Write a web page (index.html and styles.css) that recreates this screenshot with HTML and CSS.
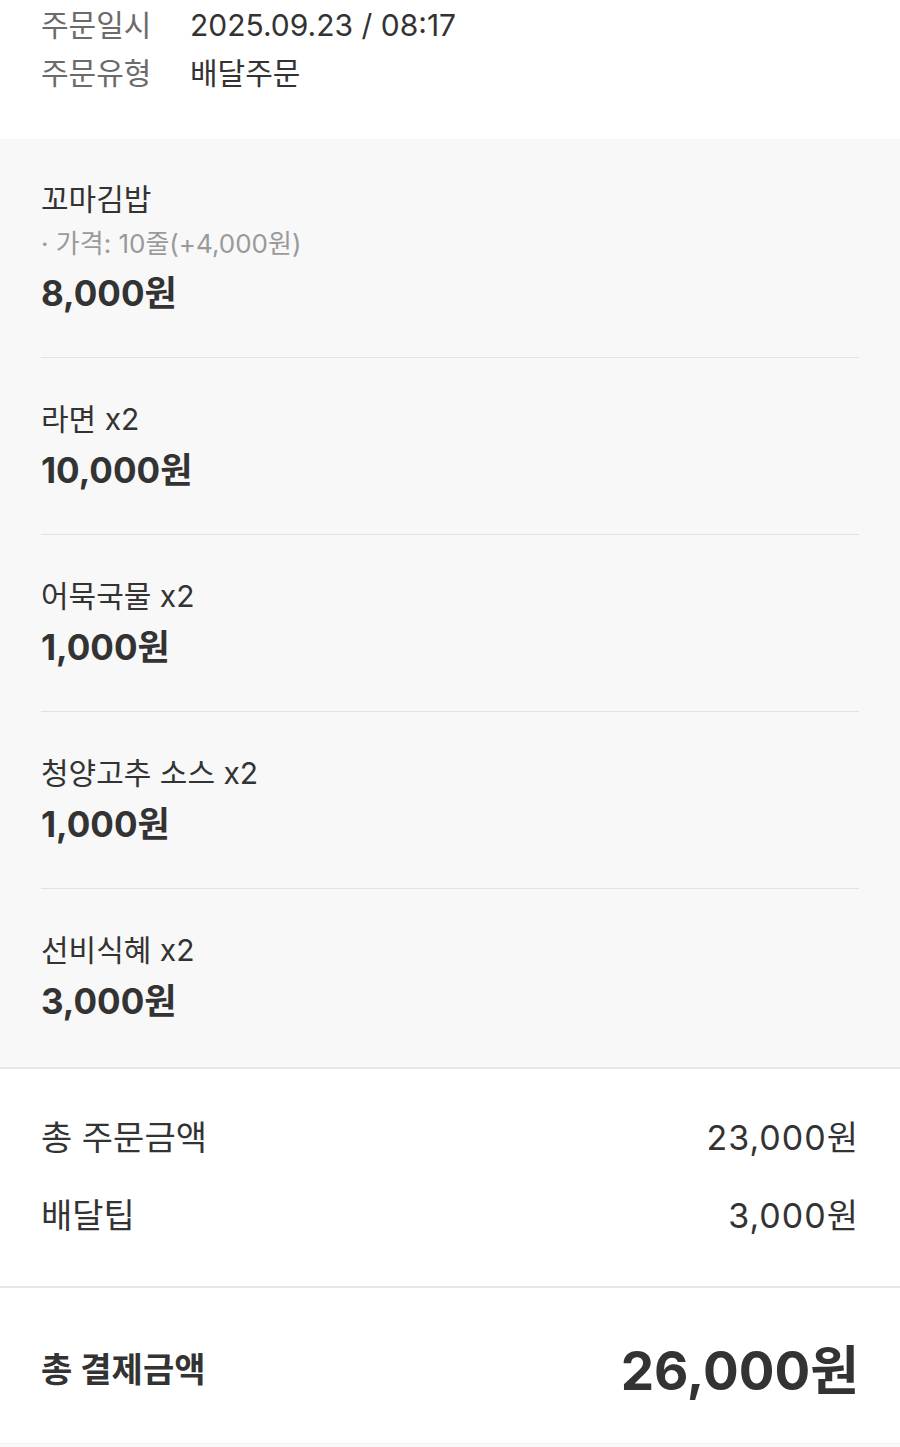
FILE: index.html
```html
<!DOCTYPE html>
<html lang="ko">
<head>
<meta charset="utf-8">
<meta name="viewport" content="width=device-width, initial-scale=1">
<title>주문상세</title>
<link rel="stylesheet" href="styles.css">
</head>
<body>
    <div class="order-info">
        <div class="info-row">
            <span class="info-label">주문일시</span>
            <span class="info-value">2025.09.23 / 08:17</span>
        </div>
        <div class="info-row">
            <span class="info-label">주문유형</span>
            <span class="info-value">배달주문</span>
        </div>
    </div>

    <div class="menu-list">
        <div class="menu-item">
            <p class="menu-name">꼬마김밥</p>
            <p class="menu-option">· 가격: 10줄(+4,000원)</p>
            <p class="menu-price">8,000원</p>
        </div>
        <div class="menu-item">
            <p class="menu-name">라면 x2</p>
            <p class="menu-price">10,000원</p>
        </div>
        <div class="menu-item">
            <p class="menu-name">어묵국물 x2</p>
            <p class="menu-price">1,000원</p>
        </div>
        <div class="menu-item">
            <p class="menu-name">청양고추 소스 x2</p>
            <p class="menu-price">1,000원</p>
        </div>
        <div class="menu-item">
            <p class="menu-name">선비식혜 x2</p>
            <p class="menu-price">3,000원</p>
        </div>
    </div>

    <div class="summary">
        <div class="summary-row">
            <span>총 주문금액</span>
            <span class="amount">23,000원</span>
        </div>
        <div class="summary-row">
            <span>배달팁</span>
            <span class="amount">3,000원</span>
        </div>
    </div>

    <div class="total">
        <span class="total-label">총 결제금액</span>
        <span class="total-price">26,000원</span>
    </div>
    <div class="bottom-space"></div>
</body>
</html>
```

FILE: styles.css
```css
body {
    font-family: Inter, "Noto Sans CJK KR", sans-serif;
    margin: 0;
    padding: 0;
    background-color: #ffffff;
    color: #333333;
}
p {
    margin: 0;
}
.order-info {
    padding: 1px 41px 42px;
}
.info-row {
    display: flex;
    font-size: 30px;
    line-height: 48px;
}
.info-label {
    width: 149px;
    color: #6b6b6b;
}
.info-value {
    color: #333333;
}
.menu-list {
    background-color: #f8f8f8;
    padding: 0 41px;
    border-bottom: 2px solid #e6e6e6;
}
.menu-item {
    padding: 40px 0 41px;
    border-bottom: 1px solid #e2e2e2;
}
.menu-item:first-child {
    padding-top: 39px;
}
.menu-item:last-child {
    border-bottom: none;
    padding-bottom: 43px;
}
.menu-name {
    font-size: 30px;
    line-height: 42px;
    color: #333333;
}
.menu-option {
    font-size: 26px;
    line-height: 38px;
    margin-top: 5px;
    color: #9a9a9a;
}
.menu-price {
    font-size: 35px;
    line-height: 46px;
    font-weight: bold;
    margin-top: 7px;
    color: #333333;
}
.summary {
    display: flex;
    flex-direction: column;
    gap: 34px;
    padding: 47px 41px 48px;
    border-bottom: 2px solid #e6e6e6;
}
.summary-row {
    display: flex;
    justify-content: space-between;
    font-size: 34px;
    line-height: 44px;
}
.amount {
    letter-spacing: 1px;
}
.total {
    display: flex;
    justify-content: space-between;
    align-items: center;
    padding: 39px 41px 36px;
    height: 80px;
    border-bottom: 1px solid #f2f2f2;
}
.total-label {
    font-size: 34px;
    font-weight: bold;
}
.total-price {
    font-size: 53px;
    font-weight: bold;
}
.bottom-space {
    height: 40px;
    background-color: #fafafa;
}
```
